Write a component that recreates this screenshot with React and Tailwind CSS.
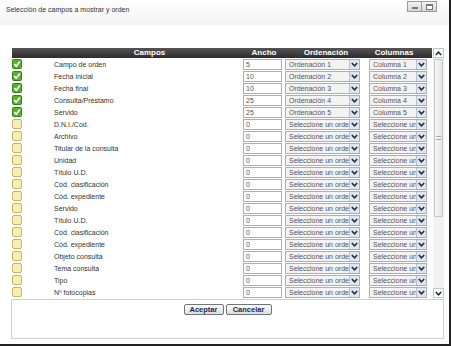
import React from "react";

const rows = [
  { label: "Campo de orden", checked: true, ancho: "5", orden: "Ordenación 1", col: "Columna 1" },
  { label: "Fecha inicial", checked: true, ancho: "10", orden: "Ordenación 2", col: "Columna 2" },
  { label: "Fecha final", checked: true, ancho: "10", orden: "Ordenación 3", col: "Columna 3" },
  { label: "Consulta/Préstamo", checked: true, ancho: "25", orden: "Ordenación 4", col: "Columna 4" },
  { label: "Servido", checked: true, ancho: "25", orden: "Ordenación 5", col: "Columna 5" },
  { label: "D.N.I./Cod." },
  { label: "Archivo" },
  { label: "Titular de la consulta" },
  { label: "Unidad" },
  { label: "Título U.D." },
  { label: "Cód. clasificación" },
  { label: "Cód. expediente" },
  { label: "Servido" },
  { label: "Título U.D." },
  { label: "Cód. clasificación" },
  { label: "Cód. expediente" },
  { label: "Objeto consulta" },
  { label: "Tema consulta" },
  { label: "Tipo" },
  { label: "Nº fotocopias" },
];

const Check = ({ checked }) =>
  checked ? (
    <svg width="10" height="10" viewBox="0 0 10 10" className="block">
      <rect x="0.5" y="0.5" width="9" height="9" rx="1" fill="#56b12e" stroke="#3b7d1f" />
      <path d="M2.2 5 L4.2 7.2 L7.9 2.6" fill="none" stroke="#fff" strokeWidth="1.6" />
    </svg>
  ) : (
    <svg width="10" height="10" viewBox="0 0 10 10" className="block">
      <rect x="0.5" y="0.5" width="9" height="9" rx="1.5" fill="#f7efb0" stroke="#c8b46a" />
    </svg>
  );

const Chevron = ({ up }) => (
  <svg width="7" height="5" viewBox="0 0 7 5" className="block">
    <path d={up ? "M0.8 4 L3.5 1.2 L6.2 4" : "M0.8 1 L3.5 3.8 L6.2 1"} fill="none" stroke="#1e2a44" strokeWidth="1.5" />
  </svg>
);

const Select = ({ value, width }) => (
  <div className={`flex h-[11px] border border-[#a9b0b8] bg-[#f3f3f3] ${width}`}>
    <div className="flex-1 overflow-hidden whitespace-nowrap pl-[3px] text-[7px] leading-[9px] text-[#555]">{value}</div>
    <div className="flex w-[10px] items-center justify-center border-l border-[#b8c2d0] bg-[#dfe5ee]">
      <Chevron />
    </div>
  </div>
);

const App = () => {
  return (
    <div className="relative h-[346px] w-[451px] overflow-hidden border-b-[2px] border-r-[2px] border-[#222] bg-white font-['Liberation_Sans',Arial,sans-serif]">
      <div className="flex h-[25px] items-start justify-between bg-gradient-to-b from-white to-[#f2f2f2] pl-[6px] pr-[12px]">
        <div className="pt-[5px] text-[7px] leading-[9px] text-[#333]">Selección de campos a mostrar y orden</div>
        <div className="mt-[1px] flex">
          <div className="flex h-[11px] w-[15px] items-center justify-center border border-[#9a9a9a] bg-gradient-to-b from-[#f4f4f4] to-[#d6d6d6]">
            <div className="mt-[2px] h-[2px] w-[6px] border border-[#777] bg-white" />
          </div>
          <div className="flex h-[11px] w-[15px] items-center justify-center border border-l-0 border-[#9a9a9a] bg-gradient-to-b from-[#f4f4f4] to-[#d6d6d6]">
            <div className="h-[6px] w-[7px] border border-[#777] border-t-2 bg-white" />
          </div>
        </div>
      </div>

      <div className="ml-[12px] mt-[23px] flex w-[432px]">
        <div className="w-[420px]">
          <div className="flex h-[10px] items-center bg-gradient-to-b from-[#555] to-[#2c2c2c] text-[8px] font-bold leading-[10px] text-white">
            <div className="w-[38px]" />
            <div className="w-[199px] text-center">Campos</div>
            <div className="w-[30px] text-center">Ancho</div>
            <div className="w-[94px] text-center">Ordenación</div>
            <div className="w-[42px] text-center">Columnas</div>
          </div>
          {rows.map((row, i) => (
            <div key={i} className="flex h-[12px] items-center">
              <div className="w-[42px]">
                <Check checked={row.checked} />
              </div>
              <div className="w-[189px] overflow-hidden whitespace-nowrap text-[7px] leading-[9px] text-[#333]">{row.label}</div>
              <div className="h-[11px] w-[39px] border border-[#a9b0b8] bg-white pl-[2px] text-[7px] leading-[9px] text-[#555]">{row.ancho || "0"}</div>
              <div className="w-[3px]" />
              <Select value={row.orden || "Seleccione un orden"} width="w-[75px]" />
              <div className="w-[9px]" />
              <Select value={row.col || "Seleccione un orden"} width="w-[58px]" />
            </div>
          ))}
        </div>
        <div className="ml-[1px] flex w-[11px] flex-col bg-[#f2f2f2]">
          <div className="flex h-[10px] items-center justify-center border border-[#c4c4c4] bg-white">
            <Chevron up />
          </div>
          <div className="flex-1 px-[1px] pt-[1px]">
            <div className="flex h-[158px] items-center justify-center rounded-[1px] border border-[#c4c4c4] bg-gradient-to-r from-[#f8f8f8] to-[#e6e6e6]">
              <div className="h-[4px] w-[5px] border-y border-[#aaa]" />
            </div>
          </div>
          <div className="flex h-[10px] items-center justify-center border border-[#c4c4c4] bg-white">
            <Chevron />
          </div>
        </div>
      </div>

      <div className="ml-[11px] mt-[1px] h-[40px] w-[433px] border border-[#cfcfcf] pt-[4px]">
        <div className="flex justify-center gap-[2px]">
          <button className="h-[11px] w-[40px] rounded-[2px] border border-[#6e7480] bg-gradient-to-b from-white to-[#dcdcdc] text-[7.5px] font-bold leading-[9px] text-[#1c2a48]">Aceptar</button>
          <button className="h-[11px] w-[46px] rounded-[2px] border border-[#6e7480] bg-gradient-to-b from-white to-[#dcdcdc] text-[7.5px] font-bold leading-[9px] text-[#1c2a48]">Cancelar</button>
        </div>
      </div>
    </div>
  );
};

export default App;
